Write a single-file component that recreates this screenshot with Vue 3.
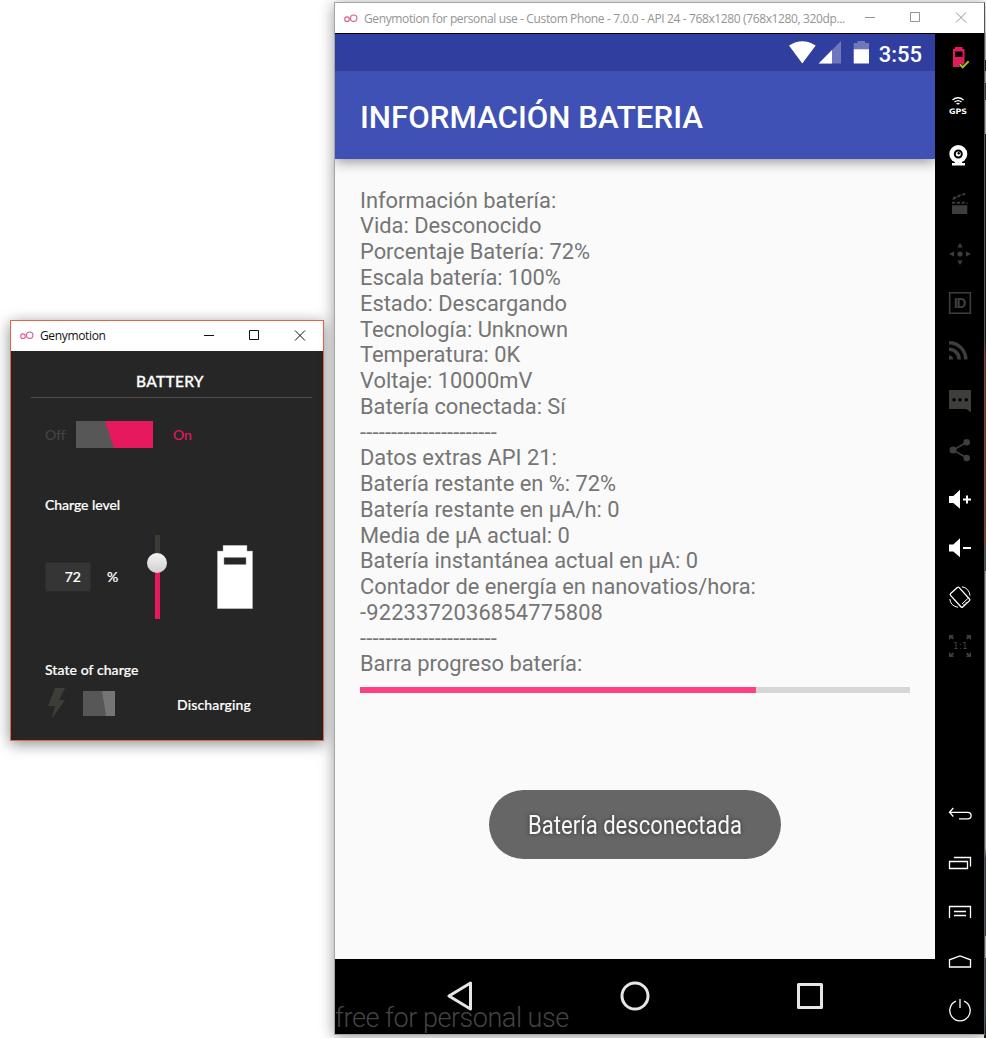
<script setup>
const level = 72
const lines = [
  'Información batería:',
  'Vida: Desconocido',
  'Porcentaje Batería: 72%',
  'Escala batería: 100%',
  'Estado: Descargando',
  'Tecnología: Unknown',
  'Temperatura: 0K',
  'Voltaje: 10000mV',
  'Batería conectada: Sí',
  '----------------------',
  'Datos extras API 21:',
  'Batería restante en %: 72%',
  'Batería restante en µA/h: 0',
  'Media de µA actual: 0',
  'Batería instantánea actual en µA: 0',
  'Contador de energía en nanovatios/hora:',
  '-9223372036854775808',
  '----------------------',
  'Barra progreso batería:',
]
</script>

<template>
  <div class="desktop">
    <div class="behind"></div>

    <section class="panel">
      <header class="caption">
        <svg class="logo" width="14" height="9" viewBox="0 0 14 9"><circle cx="3" cy="5.2" r="2.3" /><circle cx="9.7" cy="4.2" r="3.2" /></svg>
        <span class="caption-text">Genymotion</span>
        <svg class="controls" width="102" height="12" viewBox="0 0 102 12">
          <path d="M0 5.500h10M45.500 .5h9v9h-9zM91 .5l10 10M101 .5l-10 10" />
        </svg>
      </header>
      <div class="panel-body">
        <h2>BATTERY</h2>
        <div class="row power">
          <span class="off">Off</span>
          <svg width="77" height="27" viewBox="0 0 77 27"><path fill="#e6195f" d="M0 0h77v27H0z" /><path fill="#575757" d="M0 0h29l9 27H0z" /></svg>
          <span class="on">On</span>
        </div>
        <div class="label">Charge level</div>
        <div class="row charge">
          <div class="field">{{ level }}</div>
          <span class="pct">%</span>
          <svg class="slider" width="22" height="84" viewBox="0 0 22 84">
            <defs><linearGradient id="knob" x2="0" y2="1"><stop stop-color="#f4f4f4" /><stop offset="1" stop-color="#cfcfcf" /></linearGradient></defs>
            <path fill="#3c3c37" d="M9 0h5v28H9z" /><path fill="#e6195f" d="M9 28h5v56H9z" /><circle cx="11" cy="28" r="10" fill="url(#knob)" />
          </svg>
          <svg class="cell" width="36" height="64" viewBox="0 0 36 64"><path fill="#fff" stroke="#8d8d8d" stroke-width=".5" fill-rule="evenodd" d="M6 .2h24V6h5.700v57.800H.3V6H6zM7 12.500v7h22v-7z" /></svg>
        </div>
        <div class="label second">State of charge</div>
        <div class="row state">
          <svg width="17" height="31" viewBox="0 0 17 31"><path fill="#3e3e38" d="M7 0h10l-6 12h6L3.500 31 7 18H0z" /></svg>
          <svg class="mini" width="32" height="25" viewBox="0 0 32 25"><path fill="#757575" d="M0 0h32v25H0z" /><path fill="#575757" d="M0 0h19l4 25H0z" /></svg>
          <span>Discharging</span>
        </div>
      </div>
    </section>

    <section class="emulator">
      <header class="caption faded">
        <svg class="logo" width="14" height="9" viewBox="0 0 14 9"><circle cx="3" cy="5.200" r="2.300" /><circle cx="9.700" cy="4.200" r="3.200" /></svg>
        <span class="caption-text">Genymotion for personal use - Custom Phone - 7.0.0 - API 24 - 768x1280 (768x1280, 320dp...</span>
        <svg class="controls" width="102" height="12" viewBox="0 0 102 12">
          <path d="M0 5.500h10M45.500 .5h9v9h-9zM91 .5l10 10M101 .5l-10 10" />
        </svg>
      </header>
      <div class="machine">
        <div class="screen">
          <div class="status">
            <svg width="81" height="23" viewBox="0 0 81 23">
              <path fill="#fff" d="M0 4.500Q13.300-4 26.700 4.500L13.300 22.500z" />
              <path fill="#7078bd" d="M52 0v22.500H29.700z" /><path fill="#fff" d="M43 9v13.500H29.700z" />
              <path fill="#7078bd" d="M68.500 0h7.500v2h4v7H64.700V2h3.800z" /><path fill="#fff" d="M64.700 8.300H80v14.200H64.700z" />
            </svg>
            <span>3:55</span>
          </div>
          <div class="toolbar">INFORMACIÓN BATERIA</div>
          <main>
            <p v-for="(line, i) in lines" :key="i" :class="{ loose: line.startsWith('-') }">{{ line }}</p>
            <div class="progress"><div :style="{ width: level + '%' }"></div></div>
            <div class="toast">
              <svg width="240" height="44" viewBox="0 0 240 44"><text x="0" y="31" textLength="214" lengthAdjust="spacingAndGlyphs">Batería desconectada</text></svg>
            </div>
          </main>
          <nav>
            <svg width="26" height="30" viewBox="0 0 26 30"><path d="M23.500 2v26L2 15z" /></svg>
            <svg width="30" height="30" viewBox="0 0 30 30"><circle cx="15" cy="15" r="13" /></svg>
            <svg width="28" height="28" viewBox="0 0 28 28"><path d="M2.500 2.500h23v23h-23z" /></svg>
            <div class="watermark">free for personal use</div>
          </nav>
        </div>

        <aside>
          <div class="tools">
            <svg viewBox="0 0 49 49">
              <path fill="#e6195f" fill-rule="evenodd" d="M20 14h7.500v2h2v18H18V16h2zM20 18.500V24h7.500v-5.500z" />
              <path fill="none" stroke="#000" stroke-width="3" d="M24.700 31l3 3.300 6-6" /><path fill="none" stroke="#9abf1f" stroke-width="2" d="M24.700 31l3 3.300 6-6" />
            </svg>
            <svg viewBox="0 0 49 49">
              <path class="w-line" d="M17.500 18Q23 13.500 28.500 18M19.500 20Q23 17.200 26.500 20M21.500 22q1.500-1 3 0" />
              <text class="gps" x="14" y="31.500" textLength="18" lengthAdjust="spacingAndGlyphs">GPS</text>
            </svg>
            <svg viewBox="0 0 49 49">
              <circle cx="23.300" cy="23" r="9" fill="#fff" /><circle cx="23.300" cy="23" r="3.500" fill="#fff" stroke="#000" stroke-width="2" /><circle cx="23.700" cy="22.300" r="1.200" fill="#000" />
              <path fill="#fff" d="M20 30h7v2h3v2.500H17V32h3z" />
            </svg>
            <svg viewBox="0 0 49 49">
              <path class="d" d="M17 21.700h15.300V34H17zM17 19.500l2-3 3 .3-2 2.700zM21.500 17.500l2-2.700 3-.6-2 2.700zM26.500 15.500l1.500-2 2.500-.5-.8 2.300z" />
              <path stroke="#000" stroke-width="1.300" d="M17 24.500h15.500M20 24l2-2.500M25 24l2-2.500M29.500 24l2-2.500" />
            </svg>
            <svg viewBox="0 0 49 49"><circle class="d" cx="25" cy="25" r="2.600" /><path class="d" d="M25 14l2.700 4.500h-5.400zM25 36l2.700-4.500h-5.400zM14 25l5-2.500v5zM36 25l-5-2.500v5z" /></svg>
            <svg viewBox="0 0 49 49"><path class="d-line" d="M14.700 14.700h20.600v20.600H14.700z" /><text class="id" x="18.500" y="30" textLength="13">ID</text></svg>
            <svg viewBox="0 0 49 49"><path class="d" d="M14 28.500a4 4 0 0 1 4 4h-4z" /><path fill="none" stroke="#3e3e3b" stroke-width="3.500" d="M14 22.300a10.200 10.200 0 0 1 10.200 10.200M14 15.700a16.800 16.800 0 0 1 16.800 16.800" /></svg>
            <svg viewBox="0 0 49 49"><path class="d" d="M14 14h22v22.500L31.500 33H14z" /><circle cx="19" cy="23.700" r="1.700" /><circle cx="25" cy="23.700" r="1.700" /><circle cx="31.300" cy="23.700" r="1.700" /></svg>
            <svg viewBox="0 0 49 49"><path class="d-line" d="M32 17.300L18 25l14 8" /><circle class="d" cx="31.700" cy="17.300" r="3.300" /><circle class="d" cx="18" cy="25" r="3.500" /><circle class="d" cx="31.700" cy="33" r="3.300" /></svg>
            <svg viewBox="0 0 49 49"><path fill="#fff" d="M14 22h4.300l6.700-6.300v19L18.300 29H14zM28 24.400h3v-3h2v3h3v2h-3v3h-2v-3h-3z" /></svg>
            <svg viewBox="0 0 49 49"><path fill="#fff" d="M14 21.500h4.300L25 15.300v19L18.300 28.500H14zM28 24h8v2h-8z" /></svg>
            <svg viewBox="0 0 49 49">
              <rect class="w-line" x="-9" y="-5.800" width="18" height="11.600" rx="1.300" transform="translate(25 25.200) rotate(48)" />
              <path class="w-line thin" d="M27 14.800Q34 16 35 23.500M14.800 27Q15.500 34 23 35.300M27 32l5.800-5.500M28.500 33l1-1M30.500 31.200l1-1" />
            </svg>
            <svg viewBox="0 0 49 49">
              <path class="d" d="M14 14h5l-1.500 1.500 1.500 1.500L17.500 18.500 16 17l-2 2zM36 14v5l-2-2-1.500 1.500L31 17l1.500-1.500L31 14zM14 36v-5l2 2 1.500-1.500L19 33l-1.500 1.500L19 36zM36 36h-5l1.500-1.500L31 33l1.500-1.500L34 33l2-2z" />
              <text class="ratio" x="18.300" y="28" textLength="14">1:1</text>
            </svg>
          </div>
          <div class="tools">
            <svg viewBox="0 0 49 49"><path class="w-line" d="M18.300 19L14.500 23.300l3.800 4.200M14.500 23.300h18.300a3.300 3.300 0 0 1 0 6.600H24" /></svg>
            <svg viewBox="0 0 49 49"><path class="w-line" d="M14.500 23.500h18v7h-18zM19 19.500h16.500v9" /></svg>
            <svg viewBox="0 0 49 49"><path class="w-line" d="M14.500 31V19.500h21V31M19 24.500h12M19 28.500h12" /></svg>
            <svg viewBox="0 0 49 49"><path class="w-line" d="M14.500 31v-7.200L25 20l10.500 3.800V31z" /></svg>
            <svg viewBox="0 0 49 49"><path class="w-line" d="M21 16.200a10.200 10.200 0 1 0 8 0M25 14v9" /></svg>
          </div>
        </aside>
      </div>
    </section>
  </div>
</template>

<style>
html, body { margin: 0; overflow: hidden; background: #fff; }
</style>

<style scoped>
.desktop { position: relative; width: 986px; height: 1038px; overflow: hidden; background: #fff; }
.behind {
  position: absolute; right: 0; top: 33px; width: 2px; height: 1005px;
  background: linear-gradient(#ccc 0 27px, #2c2926 27px 38px, #bbb 38px 50px, #454845 50px 67px, #ccc 67px 101px, #1c1816 101px 305px, #8f2c17 325px, #b23a20 510px, #4b6074 515px 538px, #c9c5c3 538px 815px, #3c4e5e 825px 903px, #ccc 903px 925px, #405161 925px 980px, #221d1a);
}
.panel {
  position: absolute; left: 10px; top: 320px; width: 314px; height: 421px; box-sizing: border-box;
  border: 1px solid #df6845; background: #262626; box-shadow: 0 3px 14px rgba(0, 0, 0, .45);
}
.emulator {
  position: absolute; left: 334px; top: 2px; width: 651px; height: 1033px; box-sizing: border-box;
  border: 1px solid #a5a5a5; border-right-color: #555; background: #000; box-shadow: 0 2px 14px rgba(0, 0, 0, .4);
}
.caption { display: flex; height: 30px; align-items: center; background: #fff; color: #111; font: 12px "Open Sans", sans-serif; padding: 0 17px 1px 9px; box-sizing: border-box; }
.caption-text { white-space: nowrap; margin-left: 6px; letter-spacing: -.35px; }
.logo { fill: none; stroke: #df5c87; stroke-width: 1.1; }
.controls { margin-left: auto; fill: none; stroke: #111; stroke-width: 1; }
.faded { color: #949494; padding-bottom: 0; }
.faded .caption-text { letter-spacing: -.37px; }
.faded .controls { stroke: #949494; }

.panel-body { padding: 0 11px 0 34px; color: #fff; font: 500 14px/20px Lato, sans-serif; }
h2 { margin: 0 0 0 -14px; height: 46px; border-bottom: 1px solid #4c4c4c; font: 500 15.5px/61px Lato, sans-serif; text-align: center; padding-right: 3px; letter-spacing: .3px; -webkit-text-stroke: .3px #fff; }
.row { display: flex; align-items: center; }
.power { height: 27px; margin-top: 23px; }
.off { width: 31px; color: #444; }
.on { margin-left: 20px; color: #e6195f; }
.label { margin-top: 47px; height: 20px; -webkit-text-stroke: .2px #fff; letter-spacing: -.05px; }
.charge { height: 84px; margin-top: 20px; }
.field { width: 46px; height: 30px; background: #353535; border: 1px solid #2c2c2c; line-height: 27px; box-sizing: border-box; text-align: right; padding-right: 9px; -webkit-text-stroke: .2px #fff; }
.pct { width: 39px; margin-left: 16px; -webkit-text-stroke: .2px #fff; }
.cell { margin: 0 0 0 49px; }
.second { margin-top: 41px; letter-spacing: .07px; }
.state { height: 31px; margin: 8px 0 0 3px; -webkit-text-stroke: .2px #fff; letter-spacing: .15px; }
.mini { margin: 0 62px 0 18px; }
.state span { margin-top: 3px; }

.machine { display: flex; height: 1001px; border-top: 1px solid #000; box-sizing: border-box; }
.screen { display: flex; flex-direction: column; width: 600px; height: 1000px; font-family: Roboto, sans-serif; }
.status { display: flex; height: 37px; background: #303f9f; justify-content: flex-end; align-items: center; padding-right: 12px; box-sizing: border-box; color: #fff; font-size: 22px; font-weight: 500; }
.status svg { margin: 0 9px 0 0; }
.status span { margin-top: 3px; margin-right: 1px; }
.toolbar { height: 88px; background: #3f51b5; padding-left: 25px; box-sizing: border-box; color: #fff; font-size: 31.25px; font-weight: 500; line-height: 93px; box-shadow: 0 3px 12px rgba(0, 0, 0, .4); z-index: 1; clip-path: inset(0 0 -25px 0); }
main { flex: 1; position: relative; background: #fafafa; padding: 28.700px 25px 0; }
p { margin: 0; font-size: 21.875px; line-height: 25.78px; height: 25.78px; color: #757575; white-space: nowrap; }
.loose { letter-spacing: .18px; }
.progress { height: 6px; margin-top: 9.300px; background: #d6d6d6; }
.progress div { height: 6px; background: #ff4081; }
.toast { position: absolute; left: 154px; top: 631px; width: 292px; height: 69px; border-radius: 35px; background: #666; display: flex; align-items: center; padding-left: 39px; box-sizing: border-box; }
.toast text { font: 25px Roboto, sans-serif; fill: #f8f8f8; }
.toast svg { filter: drop-shadow(0 0 2px rgba(0, 0, 0, .5)); }
nav { position: relative; display: flex; height: 75px; background: #000; align-items: center; justify-content: space-between; padding: 0 111px 1px 112px; box-sizing: border-box; }
nav svg { fill: none; stroke: #e6e6e6; stroke-width: 3; stroke-linejoin: round; }
.watermark { position: absolute; left: 0; bottom: 1px; color: #444; font-size: 27px; font-weight: 300; line-height: 30px; white-space: nowrap; letter-spacing: -.46px; }

aside { display: flex; flex-direction: column; justify-content: space-between; width: 49px; height: 1001px; margin-top: -1px; background: #000; }
.tools { display: flex; flex-direction: column; }
.tools svg { width: 49px; height: 49px; display: block; }
.d { fill: #3e3e3b; }
.d-line { fill: none; stroke: #3e3e3b; stroke-width: 1.600; }
.w-line { fill: none; stroke: #fff; stroke-width: 1.300; }
.thin { stroke-width: 1; }
.gps { font: bold 7.500px "DejaVu Sans", sans-serif; fill: #fff; }
.id { font: bold 14px "Open Sans", sans-serif; fill: #3e3e3b; }
.ratio { font: 8px "DejaVu Sans", sans-serif; fill: #4a4a46; }
</style>
